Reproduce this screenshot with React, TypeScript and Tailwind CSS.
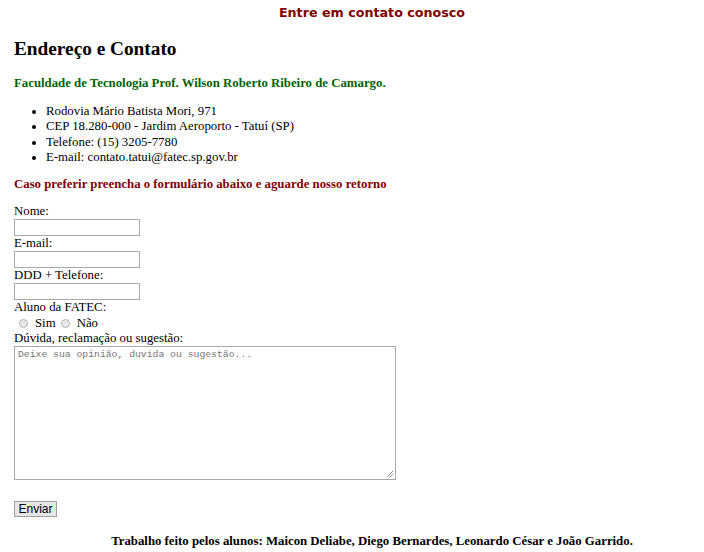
import React from "react";

const serif = { fontFamily: '"Liberation Serif", "Times New Roman", serif' };

function Field({ label }: { label: string }) {
  return (
    <div className="flex flex-col items-start">
      <div className="text-[12.8px] leading-[15px] h-[15px]">{label}</div>
      <input
        type="text"
        className="block w-[126px] h-[17px] border border-[#a9a9a9] bg-white outline-none"
      />
    </div>
  );
}

function Radio({ label }: { label: string }) {
  return (
    <span className="inline-flex items-center">
      <span className="ml-[5px] mr-[7px] inline-block w-[9px] h-[9px] rounded-full border border-[#b5b5b5] bg-[#e8e8e8]" />
      <span>{label}</span>
    </span>
  );
}

export default function App() {
  return (
    <div className="w-[704px] h-[552px] bg-white text-black overflow-hidden" style={serif}>
      <div
        className="pl-[40px] pt-[5px] text-center text-[12.7px] font-bold leading-[16px] text-[#800000]"
        style={{ fontFamily: '"DejaVu Sans", Verdana, sans-serif' }}
      >
        Entre em contato conosco
      </div>
      <div className="px-[14px]">
        <h3 className="mt-[17px] text-[19.3px] font-bold leading-[21px]">Endereço e Contato</h3>
        <div className="mt-[17px] text-[12.8px] font-bold leading-[15px] text-[#006400]">
          Faculdade de Tecnologia Prof. Wilson Roberto Ribeiro de Camargo.
        </div>
        <ul className="mt-[13px] pl-[32px] list-disc text-[12.8px] leading-[15.3px]">
          <li>Rodovia Mário Batista Mori, 971</li>
          <li>CEP 18.280-000 - Jardim Aeroporto - Tatuí (SP)</li>
          <li>Telefone: (15) 3205-7780</li>
          <li>E-mail: contato.tatui@fatec.sp.gov.br</li>
        </ul>
        <div className="mt-[12px] text-[12.8px] font-bold leading-[15px] text-[#800000]">
          Caso preferir preencha o formulário abaixo e aguarde nosso retorno
        </div>
        <div className="mt-[12px] flex flex-col">
          <Field label="Nome:" />
          <Field label="E-mail:" />
          <Field label="DDD + Telefone:" />
          <div className="text-[12.8px] leading-[15px] h-[15px]">Aluno da FATEC:</div>
          <div className="text-[12.8px] leading-[15px] h-[16px] flex items-center">
            <Radio label="Sim" />
            <Radio label="Não" />
          </div>
          <div className="text-[12.8px] leading-[15px] h-[15px]">Dúvida, reclamação ou sugestão:</div>
          <div className="relative w-[382px] h-[134px]">
            <textarea
              placeholder="Deixe sua opinião, duvida ou sugestão..."
              className="block w-[382px] h-[134px] resize-none border border-[#a9a9a9] px-[3px] py-[2px] text-[9.75px] leading-[12px] outline-none placeholder:text-[#757575]"
              style={{ fontFamily: '"Liberation Mono", "DejaVu Sans Mono", monospace' }}
            />
            <svg className="absolute right-[2px] bottom-[2px]" width="8" height="8" viewBox="0 0 8 8">
              <line x1="1" y1="7" x2="7" y2="1" stroke="#8a8a8a" strokeWidth="1" />
              <line x1="4" y1="7" x2="7" y2="4" stroke="#8a8a8a" strokeWidth="1" />
            </svg>
          </div>
          <button
            className="mt-[21px] block w-[43px] h-[16px] border border-[#a0a0a0] bg-[#e6e6e6] text-[12px] leading-[14px] text-black"
            style={{ fontFamily: '"Liberation Sans", Arial, sans-serif' }}
          >
            Enviar
          </button>
        </div>
      </div>
      <div className="mt-[17px] pl-[40px] text-center text-[12.8px] font-bold leading-[15px]">
        Trabalho feito pelos alunos: Maicon Deliabe, Diego Bernardes, Leonardo César e João Garrido.
      </div>
    </div>
  );
}
